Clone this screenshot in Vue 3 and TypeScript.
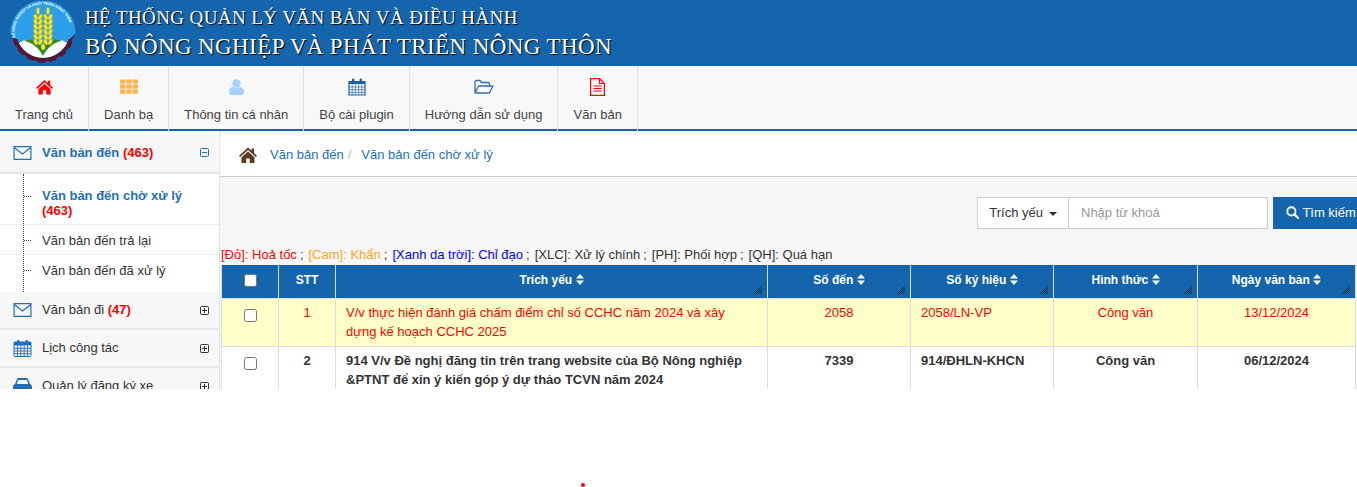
<script setup lang="ts">
const navItems = [
  { label: 'Trang chủ', icon: 'home' },
  { label: 'Danh bạ', icon: 'grid' },
  { label: 'Thông tin cá nhân', icon: 'user' },
  { label: 'Bộ cài plugin', icon: 'calendar' },
  { label: 'Hướng dẫn sử dụng', icon: 'folder' },
  { label: 'Văn bản', icon: 'file' }
];

const subItems = [
  { label: 'Văn bản đến chờ xử lý', count: '(463)', active: true },
  { label: 'Văn bản đến trả lại' },
  { label: 'Văn bản đến đã xử lý' }
];

const columns = ['Trích yếu', 'Số đến', 'Số ký hiệu', 'Hình thức', 'Ngày văn bản'];

const rows = [
  {
    stt: 1,
    title: 'V/v thực hiện đánh giá chấm điểm chỉ số CCHC năm 2024 và xây dựng kế hoạch CCHC 2025',
    so: '2058',
    kyHieu: '2058/LN-VP',
    hinhThuc: 'Công văn',
    ngay: '13/12/2024',
    urgent: true
  },
  {
    stt: 2,
    title: '914 V/v Đề nghị đăng tin trên trang website của Bộ Nông nghiệp &PTNT để xin ý kiến góp ý dự thảo TCVN năm 2024',
    so: '7339',
    kyHieu: '914/ĐHLN-KHCN',
    hinhThuc: 'Công văn',
    ngay: '06/12/2024',
    urgent: false
  }
];

// bánh răng quanh logo
const gearTeeth = [-85, -63, -41, -19, 3, 25, 47, 69, 91];
</script>

<template>
  <div class="page">
    <header class="banner">
      <svg class="logo" viewBox="0 0 68 66" width="68" height="66">
        <defs>
          <path id="logoArc" d="M5.94 38 A28.5 28.5 0 1 1 62.06 38" />
        </defs>
        <g fill="#5a1530">
          <rect
            v-for="a in gearTeeth"
            :key="a"
            x="30.5"
            y="54"
            width="7"
            height="8.5"
            :transform="`rotate(${a} 34 31)`"
          />
        </g>
        <circle cx="34" cy="31" r="30.5" fill="#5a1530" />
        <path d="M1.5 33 A32.5 32.5 0 0 1 66.5 33 L61 39 L7 39 Z" fill="#2b9fea" />
        <circle cx="34" cy="31" r="27" fill="#2b9fea" />
        <text class="logo-text" font-size="3.6" fill="#fff" font-weight="700">
          <textPath href="#logoArc">BỘ NÔNG NGHIỆP VÀ PHÁT TRIỂN NÔNG THÔN</textPath>
        </text>
        <path d="M10 43 C18 37 28 39 34 50 C40 39 50 37 58 43 A27 27 0 0 1 10 43 Z" fill="#fff" />
        <path d="M15 41 C25 37 32 42 34 50 C36 42 43 37 53 41 C45 42 38 48 34 56 C30 48 23 42 15 41 Z" fill="#2f8b2a" />
        <g fill="#f7e62b" stroke="#c7b510" stroke-width="0.4">
          <g v-for="x in [29, 39]" :key="x">
            <ellipse :cx="x" cy="11" rx="1.6" ry="3.6" />
            <ellipse v-for="y in [17, 22, 27, 32, 37, 42]" :key="y" :cx="x - 2.3" :cy="y" rx="1.7" ry="3" :transform="`rotate(-28 ${x - 2.3} ${y})`" />
            <ellipse v-for="y in [17, 22, 27, 32, 37, 42]" :key="y + 100" :cx="x + 2.3" :cy="y" rx="1.7" ry="3" :transform="`rotate(28 ${x + 2.3} ${y})`" />
          </g>
          <ellipse cx="34" cy="47" rx="2" ry="3" />
        </g>
      </svg>
      <div class="titles">
        <div class="title-sm">HỆ THỐNG QUẢN LÝ VĂN BẢN VÀ ĐIỀU HÀNH</div>
        <div class="title-lg">BỘ NÔNG NGHIỆP VÀ PHÁT TRIỂN NÔNG THÔN</div>
      </div>
    </header>

    <nav class="topnav">
      <a v-for="item in navItems" :key="item.label" class="nav-item">
        <svg v-if="item.icon === 'home'" class="nav-icon" viewBox="0 0 18 16" width="17" height="15">
          <path fill="#f00" d="M9 0.5 L12.5 3.7 V1.5 H15 V6 L18 8.7 L16.8 10 L9 3 L1.2 10 L0 8.7 Z M9 4.5 L15.5 10.3 V16 H10.8 V11.5 H7.2 V16 H2.5 V10.3 Z" />
        </svg>
        <svg v-else-if="item.icon === 'grid'" class="nav-icon" viewBox="0 0 18 15" width="18" height="15">
          <g fill="#ffb24d">
            <rect v-for="c in 9" :key="c" :x="((c - 1) % 3) * 6.3" :y="Math.floor((c - 1) / 3) * 5" width="5.4" height="4.2" rx="0.6" />
          </g>
        </svg>
        <svg v-else-if="item.icon === 'user'" class="nav-icon" viewBox="0 0 15 16" width="15" height="16">
          <circle cx="7.5" cy="4.5" r="4.2" fill="#a5d1ff" />
          <path fill="#a5d1ff" d="M0 13 C0 9.5 2 8 4 8 C6 9.6 9 9.6 11 8 C13 8 15 9.5 15 13 C15 15 14 16 12.5 16 H2.5 C1 16 0 15 0 13 Z" />
        </svg>
        <svg v-else-if="item.icon === 'calendar'" class="nav-icon" viewBox="0 0 18 18" width="18" height="18">
          <path fill="none" stroke="#1e5fa8" stroke-width="1.2" d="M1 3.5 H17 V17 H1 Z" />
          <rect x="1" y="3" width="16" height="3" fill="#1e5fa8" />
          <rect x="4" y="0.5" width="2.4" height="4" rx="1" fill="#1e5fa8" />
          <rect x="11.6" y="0.5" width="2.4" height="4" rx="1" fill="#1e5fa8" />
          <path stroke="#1e5fa8" stroke-width="0.6" d="M1 9 H17 M1 11.7 H17 M1 14.4 H17 M4.2 6 V17 M7.4 6 V17 M10.6 6 V17 M13.8 6 V17" />
        </svg>
        <svg v-else-if="item.icon === 'folder'" class="nav-icon" viewBox="0 0 20 15" width="20" height="15">
          <path fill="none" stroke="#2f6db5" stroke-width="1.3" stroke-linejoin="round" d="M1 13.5 V2.5 C1 1.5 1.5 1 2.5 1 H6 L7.5 3 H14 C15 3 15.5 3.5 15.5 4.5 V6 M1 13.5 L4.5 6.5 H19 L15.5 13.5 Z" />
        </svg>
        <svg v-else class="nav-icon" viewBox="0 0 15 18" width="15" height="18">
          <path fill="none" stroke="#f00" stroke-width="1.2" d="M0.6 0.6 H9.5 L14.4 5.5 V17.4 H0.6 Z M9.5 0.6 V5.5 H14.4" />
          <path stroke="#f00" stroke-width="1.1" d="M3.5 8 H11.5 M3.5 10.5 H11.5 M3.5 13 H11.5" />
        </svg>
        <span class="nav-label">{{ item.label }}</span>
      </a>
    </nav>

    <div class="body">
      <aside class="sidebar">
        <div class="menu-head open">
          <svg class="menu-icon" viewBox="0 0 18 14" width="18" height="14">
            <path fill="none" stroke="#1e6fba" stroke-width="1.2" d="M0.6 0.6 H17.4 V13.4 H0.6 Z M0.8 1.5 L9 8 L17.2 1.5" />
          </svg>
          <span class="menu-label">Văn bản đến <b class="count">(463)</b></span>
          <svg class="toggle" viewBox="0 0 9 9" width="9" height="9">
            <rect x="0.5" y="0.5" width="8" height="8" rx="1" fill="none" stroke="#1e6fba" />
            <path d="M2 4.5 H7" stroke="#1e6fba" />
          </svg>
        </div>
        <ul class="submenu">
          <li v-for="s in subItems" :key="s.label" :class="{ active: s.active }">
            {{ s.label }} <b v-if="s.count" class="count">{{ s.count }}</b>
          </li>
        </ul>
        <div class="menu-head">
          <svg class="menu-icon" viewBox="0 0 18 14" width="18" height="14">
            <path fill="none" stroke="#1e6fba" stroke-width="1.2" d="M0.6 0.6 H17.4 V13.4 H0.6 Z M0.8 1.5 L9 8 L17.2 1.5" />
          </svg>
          <span class="menu-label dark">Văn bản đi <b class="count">(47)</b></span>
          <svg class="toggle" viewBox="0 0 9 9" width="9" height="9">
            <rect x="0.5" y="0.5" width="8" height="8" rx="1" fill="none" stroke="#333" />
            <path d="M2 4.5 H7 M4.5 2 V7" stroke="#333" />
          </svg>
        </div>
        <div class="menu-head">
          <svg class="menu-icon" viewBox="0 0 18 17" width="18" height="17">
            <rect x="0.5" y="2" width="17" height="14.5" rx="1" fill="none" stroke="#1e6fba" />
            <rect x="0.5" y="2" width="17" height="3.5" fill="#1e6fba" />
            <rect x="3.5" y="0" width="2.4" height="3.5" rx="1" fill="#1e6fba" />
            <rect x="12" y="0" width="2.4" height="3.5" rx="1" fill="#1e6fba" />
            <path stroke="#1e6fba" stroke-width="0.9" d="M0.5 8.3 H17.5 M0.5 11 H17.5 M0.5 13.7 H17.5 M4 5.5 V16.5 M7.3 5.5 V16.5 M10.7 5.5 V16.5 M14 5.5 V16.5" />
          </svg>
          <span class="menu-label dark">Lịch công tác</span>
          <svg class="toggle" viewBox="0 0 9 9" width="9" height="9">
            <rect x="0.5" y="0.5" width="8" height="8" rx="1" fill="none" stroke="#333" />
            <path d="M2 4.5 H7 M4.5 2 V7" stroke="#333" />
          </svg>
        </div>
        <div class="menu-head">
          <svg class="menu-icon" viewBox="0 0 19 16" width="19" height="16">
            <path fill="#1e6fba" d="M4 1 C4.5 0.3 5 0 6 0 H13 C14 0 14.5 0.3 15 1 L17 6 C18.3 6.5 19 7.5 19 9 V14 H0 V9 C0 7.5 0.7 6.5 2 6 Z M5 2 L3.8 6 H15.2 L14 2 Z" />
            <rect x="1" y="14" width="4" height="2" fill="#1e6fba" />
            <rect x="14" y="14" width="4" height="2" fill="#1e6fba" />
          </svg>
          <span class="menu-label dark">Quản lý đăng ký xe</span>
          <svg class="toggle" viewBox="0 0 9 9" width="9" height="9">
            <rect x="0.5" y="0.5" width="8" height="8" rx="1" fill="none" stroke="#333" />
            <path d="M2 4.5 H7 M4.5 2 V7" stroke="#333" />
          </svg>
        </div>
      </aside>

      <main class="content">
        <div class="breadcrumb">
          <svg class="crumb-home" viewBox="0 0 18 16" width="18" height="16">
            <path fill="#5a3a20" d="M9 0.5 L12.5 3.7 V1.5 H15 V6 L18 8.7 L16.8 10 L9 3 L1.2 10 L0 8.7 Z M9 4.5 L15.5 10.3 V16 H10.8 V11.5 H7.2 V16 H2.5 V10.3 Z" />
          </svg>
          <a>Văn bản đến</a>
          <span class="sep">/</span>
          <a>Văn bản đến chờ xử lý</a>
        </div>

        <div class="panel">
          <div class="search">
            <button class="field-btn">Trích yếu <i class="caret"></i></button>
            <div class="keyword">Nhập từ khoá</div>
            <button class="search-btn">
              <svg viewBox="0 0 14 14" width="13" height="13">
                <circle cx="5.8" cy="5.8" r="4.4" fill="none" stroke="#fff" stroke-width="2" />
                <path d="M9 9 L13 13" stroke="#fff" stroke-width="2.4" stroke-linecap="round" />
              </svg>
              Tìm kiếm
            </button>
          </div>

          <div class="legend">
            <span class="red">[Đỏ]: Hoả tốc</span><span class="semi">;</span>
            <span class="orange">[Cam]: Khẩn</span><span class="semi">;</span>
            <span class="blue">[Xanh da trời]: Chỉ đạo</span><span class="semi">;</span>
            <span>[XLC]: Xử lý chính</span><span class="semi">;</span>
            <span>[PH]: Phối hợp</span><span class="semi">;</span>
            <span>[QH]: Quá hạn</span>
          </div>

          <table class="grid">
            <colgroup>
              <col style="width: 57px" />
              <col style="width: 57px" />
              <col style="width: 432px" />
              <col style="width: 143px" />
              <col style="width: 143px" />
              <col style="width: 144px" />
              <col style="width: 158px" />
            </colgroup>
            <thead>
              <tr>
                <th><span class="box head-box"></span></th>
                <th>STT</th>
                <th v-for="c in columns" :key="c">
                  {{ c }}
                  <svg class="sort" viewBox="0 0 8 11" width="8" height="11">
                    <path fill="#fff" d="M4 0 L8 4.5 H0 Z M4 11 L8 6.5 H0 Z" />
                  </svg>
                  <svg class="resize" viewBox="0 0 8 8" width="8" height="8">
                    <path stroke="#222" stroke-width="0.8" fill="none" d="M0 8 L8 0 M2 8 L8 2 M4 8 L8 4 M6 8 L8 6" />
                  </svg>
                </th>
              </tr>
            </thead>
            <tbody>
              <tr v-for="r in rows" :key="r.stt" :class="r.urgent ? 'urgent' : 'unread'">
                <td class="center"><span class="box"></span></td>
                <td class="center">{{ r.stt }}</td>
                <td>{{ r.title }}</td>
                <td class="center">{{ r.so }}</td>
                <td>{{ r.kyHieu }}</td>
                <td class="center">{{ r.hinhThuc }}</td>
                <td class="center">{{ r.ngay }}</td>
              </tr>
            </tbody>
          </table>
        </div>
      </main>
    </div>
    <i class="dot"></i>
  </div>
</template>

<style scoped>
* {
  box-sizing: border-box;
}

.page {
  font-family: "Liberation Sans", Arial, sans-serif;
  font-size: 13px;
  line-height: 1.5;
  color: #333;
}

.banner {
  height: 66px;
  background: #1565ad;
  display: flex;
  padding-left: 9px;
  overflow: hidden;
}

.logo {
  flex: none;
}

.logo-text {
  font-family: "Liberation Sans", sans-serif;
}

.titles {
  margin-left: 8px;
  padding-top: 6px;
  font-family: "Liberation Serif", "Times New Roman", serif;
  color: #fff;
  text-shadow: 1px 1px 1px #000;
  white-space: nowrap;
}

.title-sm {
  font-size: 19px;
  line-height: 24px;
  letter-spacing: 0.4px;
}

.title-lg {
  font-size: 23px;
  line-height: 34px;
  letter-spacing: 0.4px;
}

.topnav {
  height: 65px;
  background: #f8f8f8;
  border-bottom: 2px solid #1565ad;
  display: flex;
}

.nav-item {
  padding: 0 15px;
  border-right: 1px solid #e0e0e0;
  height: 65px;
  display: flex;
  flex-direction: column;
  align-items: center;
  color: #444;
}

.nav-icon {
  height: 20px;
  margin-top: 11px;
}

.nav-label {
  margin-top: 8px;
  white-space: nowrap;
}

.body {
  height: 258px;
  display: flex;
  overflow: hidden;
  background: #f7f7f7;
}

.sidebar {
  width: 220px;
  flex: none;
  background: #fff;
  border-right: 1px solid #e4e4e4;
  padding-top: 4px;
  overflow: hidden;
}

.menu-head {
  height: 38px;
  background: #f7f7f7;
  border-bottom: 2px solid #e6e6e6;
  display: flex;
  align-items: center;
  padding: 0 10px 0 13px;
}

.menu-head.open {
  height: 39px;
  padding-bottom: 2px;
}

.menu-icon {
  width: 19px;
  flex: none;
}

.menu-label {
  margin-left: 10px;
  flex: 1;
  font-weight: 700;
  color: #1e6fba;
  white-space: nowrap;
}

.menu-label.dark {
  font-weight: 400;
  color: #333;
}

.count {
  color: #f00;
  font-weight: 700;
}

.submenu {
  list-style: none;
  margin: 0;
  padding: 0;
  position: relative;
}

.submenu::before {
  content: "";
  position: absolute;
  left: 23px;
  top: 0;
  bottom: 0;
  border-left: 1px dotted #444;
}

.submenu li {
  position: relative;
  line-height: 15px;
  padding: 8px 10px 6px 42px;
  border-bottom: 1px dotted #ddd;
  color: #333;
}

.submenu li:first-child {
  padding-top: 14px;
  padding-bottom: 6px;
}

.submenu li:last-child {
  border-bottom: 0;
  padding-bottom: 14px;
}

.submenu li::before {
  content: "";
  position: absolute;
  left: 24px;
  top: 15px;
  width: 7px;
  border-top: 1px dotted #444;
}

.submenu li:first-child::before {
  top: 22px;
}

.submenu li.active {
  font-weight: 700;
  color: #1e6fba;
}

.content {
  flex: 1;
  min-width: 0;
  padding-top: 4px;
  overflow: hidden;
}

.breadcrumb {
  height: 42px;
  background: #fff;
  border-bottom: 1px solid #ccc;
  display: flex;
  align-items: center;
  padding-left: 19px;
  padding-bottom: 2px;
  color: #1e6fba;
}

.crumb-home {
  margin-right: 13px;
}

.sep {
  color: #bbb;
  margin: 0 10px 0 4px;
}

.panel {
  width: 1200px;
  padding-left: 1px;
}

.search {
  display: flex;
  padding: 20px 0 0 756px;
  height: 68px;
}

.field-btn {
  width: 92px;
  height: 32px;
  font: inherit;
  color: #333;
  background: #fff;
  border: 1px solid #ccc;
  padding: 0;
}

.caret {
  display: inline-block;
  width: 0;
  height: 0;
  margin-left: 2px;
  vertical-align: middle;
  border-top: 4px solid #333;
  border-left: 4px solid transparent;
  border-right: 4px solid transparent;
}

.keyword {
  width: 200px;
  height: 32px;
  margin-left: -1px;
  background: #fff;
  border: 1px solid #ccc;
  color: #999;
  padding: 5px 12px;
}

.search-btn {
  margin-left: 5px;
  width: 95px;
  height: 32px;
  flex: none;
  font: inherit;
  color: #fff;
  background: #1565ad;
  border: 0;
  padding: 0 0 0 13px;
  text-align: left;
  white-space: nowrap;
}

.search-btn svg {
  vertical-align: -2px;
}

.legend {
  height: 20px;
  white-space: nowrap;
  color: #333;
}

.semi {
  margin: 0 5px 0 3px;
}

.red {
  color: #f00;
}

.orange {
  color: #ffa31a;
}

.blue {
  color: #00f;
}

.grid {
  border-collapse: collapse;
  table-layout: fixed;
  width: 1134px;
}

.grid th {
  height: 33px;
  background: #1565ad;
  color: #fff;
  font-size: 12px;
  font-weight: 700;
  border: 1px solid #ddd;
  border-top: 0;
  position: relative;
  padding: 0 8px 3px;
  text-align: center;
}

.sort {
  vertical-align: -1px;
}

.resize {
  position: absolute;
  right: 5px;
  bottom: 4px;
}

.grid td {
  border: 1px solid #ddd;
  padding: 4px 10px;
  vertical-align: top;
  background: #fff;
}

.grid td.center {
  text-align: center;
}

.urgent td {
  background: #ffffc9;
  color: #f00;
}

.unread td {
  font-weight: 700;
}

.box {
  display: inline-block;
  width: 13px;
  height: 13px;
  background: #fff;
  border: 1px solid #767676;
  border-radius: 2.5px;
  vertical-align: middle;
  margin-top: 4px;
}

.head-box {
  margin-top: 0;
}

.dot {
  position: absolute;
  left: 581px;
  top: 483px;
  width: 4px;
  height: 4px;
  border-radius: 50%;
  background: #f00;
}
</style>

<style>
html,
body {
  background: #fff;
  overflow: hidden;
}
</style>
